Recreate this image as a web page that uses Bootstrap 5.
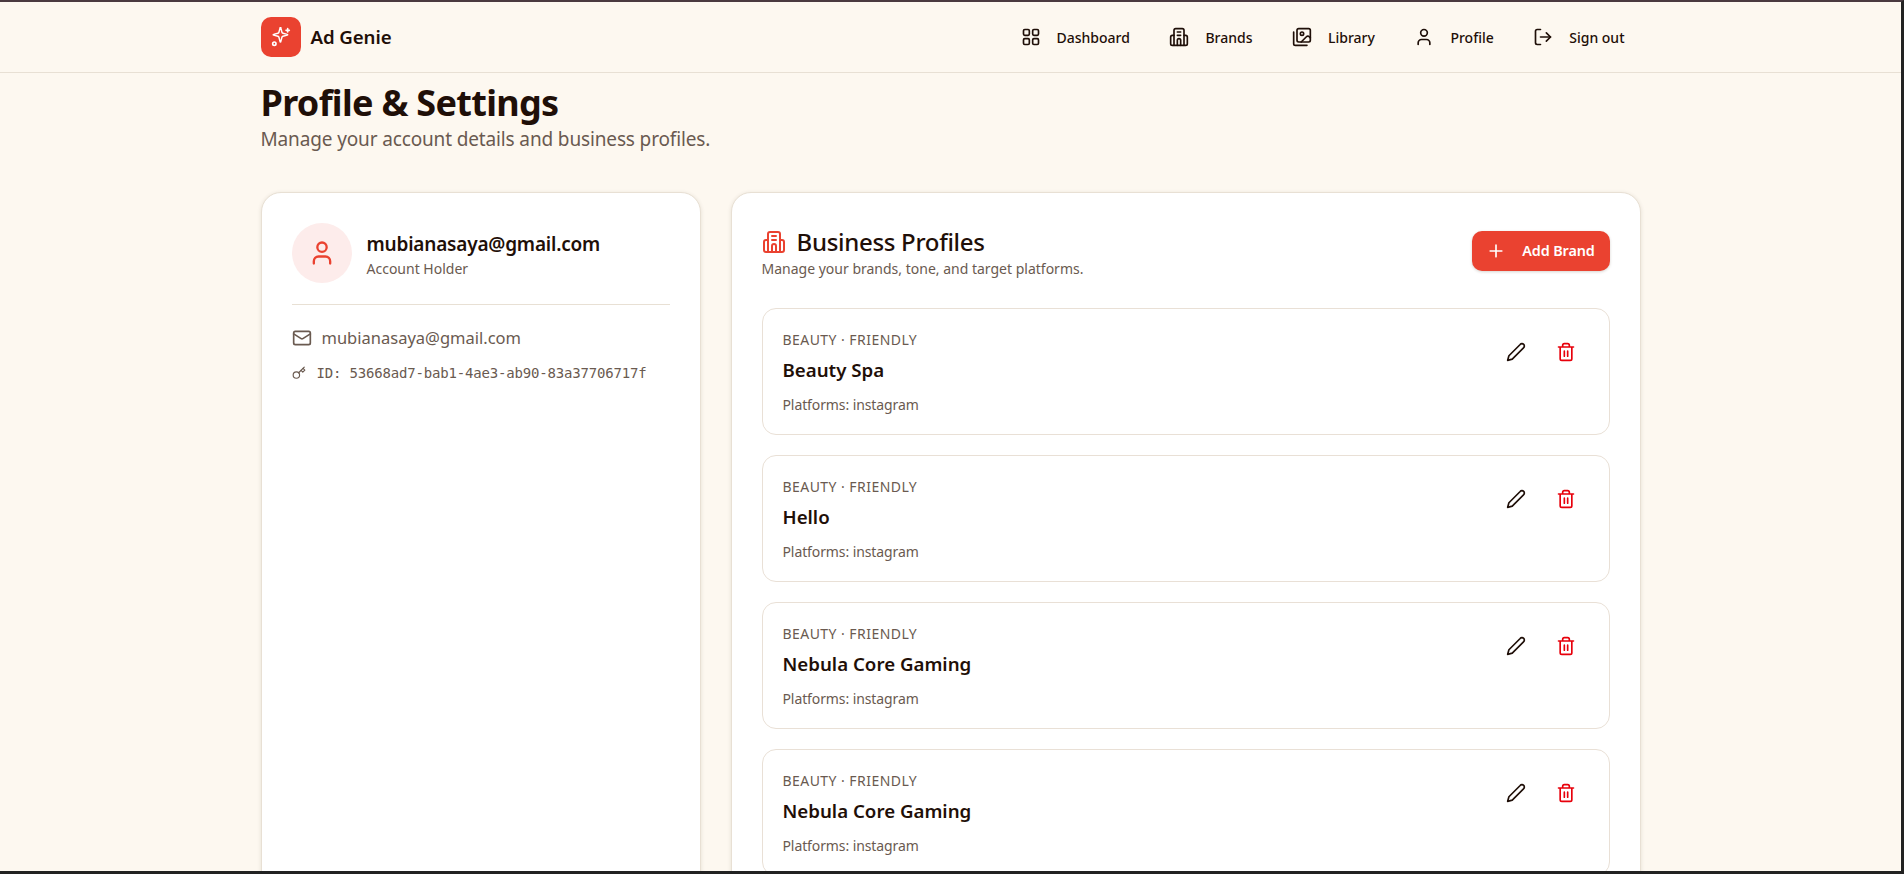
<!doctype html>
<html lang="en">
<head>
  <meta charset="utf-8">
  <title>Profile & Settings - Ad Genie</title>
  <link href="https://cdn.jsdelivr.net/npm/bootstrap@5.3.3/dist/css/bootstrap.min.css" rel="stylesheet">
  <style>
    html, body { height: 100%; overflow: hidden; }
    body { font-family: "Noto Sans", "Open Sans", sans-serif; background: #fdf8f0; color: #1f0f08; }
    .frame { height: 100vh; overflow: hidden; border-top: 2px solid #4a3a40; border-bottom: 3px solid #222; border-right: 3px solid #222; }
    .ico { fill: none; stroke: currentColor; stroke-width: 2; stroke-linecap: round; stroke-linejoin: round; flex-shrink: 0; }
    .wrap { width: 1380px; margin: 0 auto; }
    .topbar { height: 71px; border-bottom: 1px solid #e8e0d4; }
    .logo-box { width: 40px; height: 40px; border-radius: 10px; background: #ea4230; color: #fff; }
    .logo-name { font-size: 18.7px; font-weight: 600; letter-spacing: -.1px; margin-left: 10px; }
    .top-link { font-size: 14px; font-weight: 500; color: #1f0f08; text-decoration: none; gap: 16px; padding: 8px 16px; margin-left: 7.5px; }
    .page-title { font-size: 36px; font-weight: 700; line-height: 44px; margin: 8px 0 0; letter-spacing: -.7px; }
    .page-sub { font-size: 19px; line-height: 28px; color: #6a5a50; letter-spacing: -.14px; }
    .cols { display: grid; grid-template-columns: 440px 910px; gap: 30px; margin-top: 39px; }
    .panel { background: #fff; border: 1px solid #e8e0d4; border-radius: 20px; padding: 30px; box-shadow: 0 1px 4px rgba(60, 40, 20, .12); min-height: 800px; }
    .acct-head { gap: 15px; }
    .avatar { width: 60px; height: 60px; background: #fdeceb; color: #ea4230; }
    .acct-name { font-size: 19px; font-weight: 600; line-height: 26px; letter-spacing: -.2px; margin-top: 3px; }
    .acct-role { font-size: 14px; line-height: 20px; color: #6a5a50; margin-top: 2px; }
    .acct-rule { border-top: 1px solid #e8e0d4; margin: 21px 0 18px; }
    .acct-mail { font-size: 16.5px; line-height: 30px; color: #6a5a50; gap: 10px; }
    .acct-id { font-family: "DejaVu Sans Mono", "Liberation Mono", monospace; font-size: 14px; line-height: 20px; color: #6a5a50; gap: 11px; margin-top: 10px; letter-spacing: -.18px; }
    .biz-title { font-size: 24px; font-weight: 500; line-height: 32px; letter-spacing: -.3px; gap: 11px; margin-top: 3px; }
    .biz-ico { color: #ea4230; }
    .biz-sub { font-size: 14px; line-height: 20px; color: #6a5a50; margin-top: 1px; }
    .add-btn { width: 138px; height: 40px; border-radius: 10px; background: #ea4230; color: #fff; font-size: 14.4px; font-weight: 600; border: 0; gap: 16px; padding: 0; box-shadow: 0 1px 3px rgba(60, 40, 20, .2); letter-spacing: -.1px; }
    .brand-list { gap: 20px; margin-top: 29px; }
    .brand-item { height: 127px; border: 1px solid #e9e0d6; border-radius: 14px; padding: 21px 20px; }
    .brand-tag { font-size: 14px; line-height: 20px; color: #6a5a50; letter-spacing: .45px; }
    .brand-name { font-size: 18.7px; font-weight: 600; line-height: 26px; margin-top: 7px; }
    .brand-plat { font-size: 14px; line-height: 20px; color: #6a5a50; margin-top: 12px; letter-spacing: -.1px; }
    .act-btn { width: 40px; height: 40px; color: #1f0f08; background: none; border: 0; padding: 0; }
    .act-del { color: #e7000b; }
    .brand-acts { gap: 10px; margin: 2px 3px 0 0; }
  </style>
</head>
<body>
  <svg width="0" height="0" class="position-absolute">
    <symbol id="i-spark" viewBox="0 0 24 24"><path d="M9.9 15.5A2 2 0 0 0 8.5 14.1l-6.1-1.6a.5.5 0 0 1 0-1l6.1-1.6a2 2 0 0 0 1.4-1.4l1.6-6.1a.5.5 0 0 1 1 0l1.6 6.1a2 2 0 0 0 1.4 1.4l6.1 1.6a.5.5 0 0 1 0 1l-6.1 1.6a2 2 0 0 0-1.4 1.4l-1.6 6.1a.5.5 0 0 1-1 0Z" transform="translate(1 -1) scale(.86)"/><path d="M20 2v4M22 4h-4"/><circle cx="4" cy="20" r="2"/></symbol>
    <symbol id="i-grid" viewBox="0 0 24 24"><rect x="3" y="3" width="7" height="7" rx="1.5"/><rect x="14" y="3" width="7" height="7" rx="1.5"/><rect x="14" y="14" width="7" height="7" rx="1.5"/><rect x="3" y="14" width="7" height="7" rx="1.5"/></symbol>
    <symbol id="i-build" viewBox="0 0 24 24"><path d="M6 22V4a2 2 0 0 1 2-2h8a2 2 0 0 1 2 2v18"/><path d="M6 10H4a2 2 0 0 0-2 2v8a2 2 0 0 0 2 2h16a2 2 0 0 0 2-2v-8a2 2 0 0 0-2-2h-2"/><path d="M10 6h4M10 10h4M10 22v-6a2 2 0 0 1 4 0v6"/></symbol>
    <symbol id="i-images" viewBox="0 0 24 24"><path d="M18 22H4a2 2 0 0 1-2-2V6"/><path d="m22 13-1.3-1.3a2.4 2.4 0 0 0-3.4 0L11 18"/><circle cx="12" cy="8" r="2"/><rect x="6" y="2" width="16" height="16" rx="2"/></symbol>
    <symbol id="i-user" viewBox="0 0 24 24"><circle cx="12" cy="7" r="4"/><path d="M19 21v-2a4 4 0 0 0-4-4H9a4 4 0 0 0-4 4v2"/></symbol>
    <symbol id="i-out" viewBox="0 0 24 24"><path d="M9 21H5a2 2 0 0 1-2-2V5a2 2 0 0 1 2-2h4"/><path d="m16 17 5-5-5-5"/><path d="M21 12H9"/></symbol>
    <symbol id="i-mail" viewBox="0 0 24 24"><rect x="2" y="4" width="20" height="16" rx="2"/><path d="m22 7-8.97 5.7a1.94 1.94 0 0 1-2.06 0L2 7"/></symbol>
    <symbol id="i-key" viewBox="0 0 24 24"><circle cx="7.5" cy="15.5" r="5.5"/><path d="m21 2-9.6 9.6"/><path d="m15.5 7.5 3 3L22 7l-3-3"/></symbol>
    <symbol id="i-plus" viewBox="0 0 24 24"><path d="M5 12h14M12 5v14"/></symbol>
    <symbol id="i-pen" viewBox="0 0 24 24"><path d="M17 3a2.85 2.83 0 1 1 4 4L7.5 20.5 2 22l1.5-5.5Z"/></symbol>
    <symbol id="i-trash" viewBox="0 0 24 24"><path d="M3 6h18M19 6v14c0 1-1 2-2 2H7c-1 0-2-1-2-2V6M8 6V4c0-1 1-2 2-2h4c1 0 2 1 2 2v2M10 11v6M14 11v6"/></symbol>
  </svg>

  <div class="frame">
    <header class="topbar">
      <div class="wrap h-100 d-flex align-items-center justify-content-between">
        <a class="d-flex align-items-center text-decoration-none text-reset" href="#">
          <span class="logo-box d-flex align-items-center justify-content-center"><svg class="ico" width="20" height="20"><use href="#i-spark"/></svg></span>
          <span class="logo-name">Ad Genie</span>
        </a>
        <nav class="d-flex align-items-center">
          <a class="top-link d-flex align-items-center" href="#"><svg class="ico" width="20" height="20"><use href="#i-grid"/></svg>Dashboard</a>
          <a class="top-link d-flex align-items-center" href="#"><svg class="ico" width="20" height="20"><use href="#i-build"/></svg>Brands</a>
          <a class="top-link d-flex align-items-center" href="#"><svg class="ico" width="20" height="20"><use href="#i-images"/></svg>Library</a>
          <a class="top-link d-flex align-items-center" href="#"><svg class="ico" width="20" height="20"><use href="#i-user"/></svg>Profile</a>
          <a class="top-link d-flex align-items-center" href="#"><svg class="ico" width="20" height="20"><use href="#i-out"/></svg>Sign out</a>
        </nav>
      </div>
    </header>

    <main class="wrap">
      <h1 class="page-title">Profile &amp; Settings</h1>
      <div class="page-sub">Manage your account details and business profiles.</div>

      <div class="cols">
        <section class="panel">
          <div class="d-flex align-items-center acct-head">
            <span class="avatar rounded-circle d-flex align-items-center justify-content-center"><svg class="ico" width="28" height="28"><use href="#i-user"/></svg></span>
            <div>
              <div class="acct-name">mubianasaya@gmail.com</div>
              <div class="acct-role">Account Holder</div>
            </div>
          </div>
          <div class="acct-rule"></div>
          <div class="acct-mail d-flex align-items-center"><svg class="ico" width="20" height="20"><use href="#i-mail"/></svg>mubianasaya@gmail.com</div>
          <div class="acct-id d-flex align-items-center"><svg class="ico" width="14" height="14"><use href="#i-key"/></svg>ID: 53668ad7-bab1-4ae3-ab90-83a37706717f</div>
        </section>

        <section class="panel">
          <div class="d-flex justify-content-between align-items-center">
            <div>
              <div class="biz-title d-flex align-items-center"><svg class="ico biz-ico" width="24" height="24"><use href="#i-build"/></svg>Business Profiles</div>
              <div class="biz-sub">Manage your brands, tone, and target platforms.</div>
            </div>
            <button class="add-btn btn d-flex align-items-center justify-content-center"><svg class="ico" width="20" height="20"><use href="#i-plus"/></svg>Add Brand</button>
          </div>

          <div class="brand-list d-flex flex-column" id="brandList"></div>
        </section>
      </div>
    </main>
  </div>
  <script src="https://cdn.jsdelivr.net/npm/bootstrap@5.3.3/dist/js/bootstrap.bundle.min.js"></script>
  <script>
    const brands = ['Beauty Spa', 'Hello', 'Nebula Core Gaming', 'Nebula Core Gaming'];
    document.getElementById('brandList').innerHTML = brands.map(nome => `
      <div class="brand-item d-flex justify-content-between align-items-start">
        <div>
          <div class="brand-tag">BEAUTY · FRIENDLY</div>
          <div class="brand-name">${nome}</div>
          <div class="brand-plat">Platforms: instagram</div>
        </div>
        <div class="brand-acts d-flex">
          <button class="act-btn d-flex align-items-center justify-content-center"><svg class="ico" width="20" height="20"><use href="#i-pen"/></svg></button>
          <button class="act-btn act-del d-flex align-items-center justify-content-center"><svg class="ico" width="20" height="20"><use href="#i-trash"/></svg></button>
        </div>
      </div>`).join('');
  </script>
</body>
</html>
